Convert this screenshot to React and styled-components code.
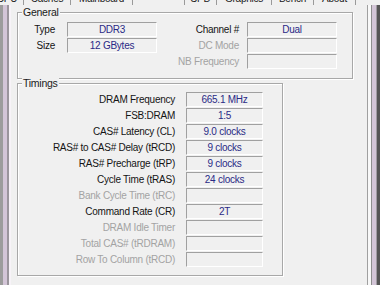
import React from 'react'
import styled, { createGlobalStyle } from 'styled-components'

const GlobalStyle = createGlobalStyle`
    html, body {
        margin: 0;
        padding: 0;
        background: #f0f0f0;
    }
    body {
        font-family: "Liberation Sans", Arial, sans-serif;
        font-size: 10px;
        letter-spacing: -0.25px;
        color: #000;
    }
`

const tabs = [
    { name: 'CPU', width: 33 },
    { name: 'Caches', width: 47 },
    { name: 'Mainboard', width: 62 },
    { name: 'Memory', width: 52, active: true },
    { name: 'SPD', width: 32 },
    { name: 'Graphics', width: 55 },
    { name: 'Bench', width: 42 },
    { name: 'About', width: 42 },
]

const timings = [
    { label: 'DRAM Frequency', value: '665.1 MHz' },
    { label: 'FSB:DRAM', value: '1:5' },
    { label: 'CAS# Latency (CL)', value: '9.0 clocks' },
    { label: 'RAS# to CAS# Delay (tRCD)', value: '9 clocks' },
    { label: 'RAS# Precharge (tRP)', value: '9 clocks' },
    { label: 'Cycle Time (tRAS)', value: '24 clocks' },
    { label: 'Bank Cycle Time (tRC)', disabled: true },
    { label: 'Command Rate (CR)', value: '2T' },
    { label: 'DRAM Idle Timer', disabled: true },
    { label: 'Total CAS# (tRDRAM)', disabled: true },
    { label: 'Row To Column (tRCD)', disabled: true },
]

const App = () => {
    return (
        <>
            <GlobalStyle />
            <Screen>
                <TabStrip>
                    {tabs.map((t) => (
                        <Tab key={t.name} $width={t.width} $active={t.active}>
                            {t.name}
                        </Tab>
                    ))}
                </TabStrip>
                <Body>
                    <LeftFrame />
                    <Page>
                        <GroupBox $width={336} $height={67} $padTop={9}>
                            <Legend>General</Legend>
                            <GeneralGrid>
                                <Label $pad={12}>Type</Label>
                                <Value>DDR3</Value>
                                <Label $pad={8}>Channel #</Label>
                                <Value>Dual</Value>

                                <Label $pad={12}>Size</Label>
                                <Value>12 GBytes</Value>
                                <Label $pad={8} $disabled>DC Mode</Label>
                                <Value />

                                <span />
                                <span />
                                <Label $pad={8} $disabled>NB Frequency</Label>
                                <Value />
                            </GeneralGrid>
                        </GroupBox>

                        <GroupBox $width={266} $height={193} $padTop={8} $gap={4}>
                            <Legend>Timings</Legend>
                            <TimingGrid>
                                {timings.map((row) => (
                                    <React.Fragment key={row.label}>
                                        <Label $pad={11} $disabled={row.disabled}>
                                            {row.label}
                                        </Label>
                                        <Value>{row.value}</Value>
                                    </React.Fragment>
                                ))}
                            </TimingGrid>
                        </GroupBox>
                    </Page>
                    <RightFrame />
                </Body>
            </Screen>
        </>
    )
}

const Screen = styled.div`
    width: 380px;
    height: 285px;
    display: flex;
    flex-direction: column;
    overflow: hidden;
    background: #f0f0f0;
`

const TabStrip = styled.div`
    height: 5px;
    display: flex;
    align-items: flex-end;
    overflow: hidden;
    flex: 0 0 auto;
    margin-left: -9px;
`

const Tab = styled.div`
    flex: 0 0 ${(p) => p.$width}px;
    box-sizing: border-box;
    height: ${(p) => (p.$active ? 16 : 12)}px;
    line-height: 12px;
    text-align: center;
    white-space: nowrap;
    overflow: hidden;
    border-right: 1px solid #9a9a9a;
    padding-bottom: ${(p) => (p.$active ? 4 : 0)}px;
    color: #1a1a1a;
`

const Body = styled.div`
    flex: 1;
    display: flex;
`

const LeftFrame = styled.div`
    flex: 0 0 11px;
    background: linear-gradient(
        to right,
        #9c9c9c 0 3px,
        #d3c5d7 3px 7px,
        #9a949c 7px 9px,
        #f7f3f8 9px 11px
    );
`

const RightFrame = styled.div`
    flex: 0 0 13px;
    background: linear-gradient(
        to right,
        #a0a0a0 0 1px,
        #f8f8f8 1px 4px,
        #8e8e8e 4px 5px,
        #d3c5d7 5px 9px,
        #a09aa2 9px 10px,
        #555555 10px 13px
    );
`

const Page = styled.div`
    flex: 1;
    padding: 7px 0 0 6px;
    display: flex;
    flex-direction: column;
`

const GroupBox = styled.div`
    position: relative;
    box-sizing: border-box;
    width: ${(p) => p.$width}px;
    height: ${(p) => p.$height}px;
    margin-top: ${(p) => p.$gap || 0}px;
    padding-top: ${(p) => p.$padTop}px;
    border: 1px solid #a8a8a8;
    box-shadow: inset 1px 1px 0 #ffffff, 1px 1px 0 #ffffff;
`

const Legend = styled.span`
    position: absolute;
    top: -7px;
    left: 4px;
    padding: 0 1px;
    line-height: 13px;
    font-size: 10.5px;
    background: #f0f0f0;
    color: #1a1a1a;
`

const GeneralGrid = styled.div`
    display: grid;
    grid-template-columns: 49px 90px 90px 90px;
    grid-auto-rows: 16px;
`

const TimingGrid = styled.div`
    display: grid;
    grid-template-columns: 168px 77px;
    grid-auto-rows: 16px;
`

const Label = styled.div`
    text-align: right;
    padding-right: ${(p) => p.$pad}px;
    line-height: 15px;
    white-space: nowrap;
    color: ${(p) => (p.$disabled ? '#a3a3a3' : '#141414')};
`

const Value = styled.div`
    box-sizing: border-box;
    height: 15px;
    line-height: 13px;
    text-align: center;
    white-space: nowrap;
    color: #2a2a86;
    border-top: 1px solid #a0a0a0;
    border-left: 1px solid #a0a0a0;
    border-bottom: 1px solid #ffffff;
    border-right: 1px solid #ffffff;
`

export default App
